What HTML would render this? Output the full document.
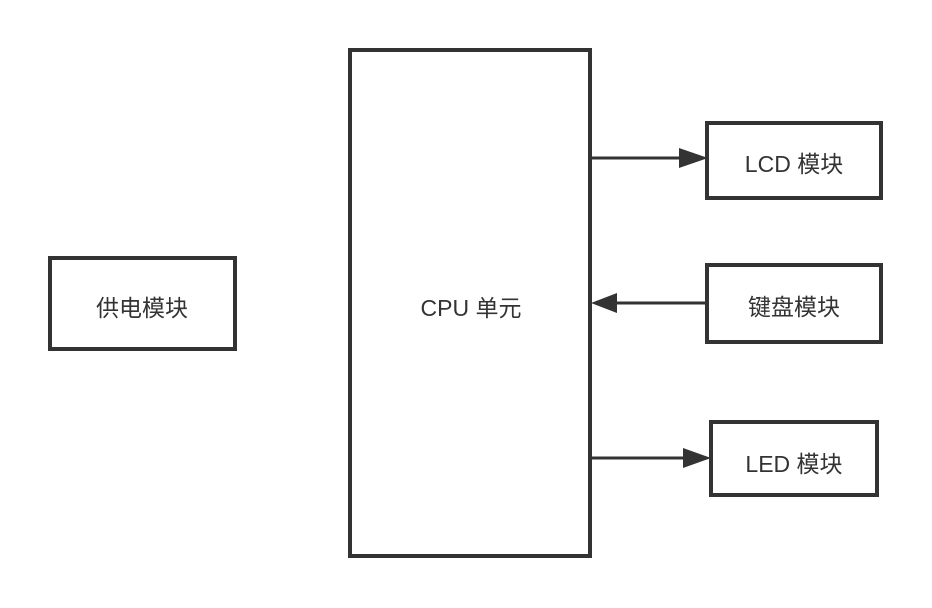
<!DOCTYPE html>
<html><head><meta charset="utf-8"><style>
html,body{margin:0;padding:0;background:#fff;width:932px;height:608px;overflow:hidden}
text{font-family:"Liberation Sans","Noto Sans CJK SC",sans-serif;font-size:23px;fill:#333}
</style></head><body>
<svg width="932" height="608" viewBox="0 0 932 608">
<g fill="none" stroke="#333" stroke-width="4">
<rect x="350" y="50" width="240" height="506"/>
<rect x="50" y="258" width="185" height="91"/>
<rect x="707" y="123" width="174" height="75"/>
<rect x="707" y="265" width="174" height="77"/>
<rect x="711" y="422" width="166" height="73"/>
<line x1="591" y1="158" x2="685" y2="158" stroke-width="3"/>
<line x1="612" y1="303" x2="706" y2="303" stroke-width="3"/>
<line x1="588" y1="458" x2="688" y2="458" stroke-width="3"/>
</g>
<g fill="#333">
<polygon points="679,148 708,158 679,168"/>
<polygon points="617,293 591,303 617,313"/>
<polygon points="683,448 711,458 683,468"/>
</g>
<text x="471" y="316" text-anchor="middle">CPU 单元</text>
<text x="142" y="316" text-anchor="middle">供电模块</text>
<text x="794" y="172" text-anchor="middle">LCD 模块</text>
<text x="794" y="315" text-anchor="middle">键盘模块</text>
<text x="794" y="472" text-anchor="middle">LED 模块</text>
</svg>
</body></html>
